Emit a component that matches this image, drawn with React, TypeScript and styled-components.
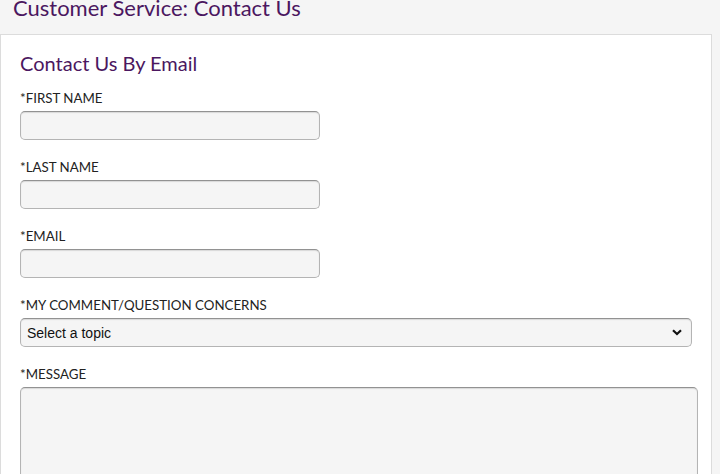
import React from "react";
import styled, { createGlobalStyle } from "styled-components";

const Global = createGlobalStyle`
  html, body { margin: 0; padding: 0; }
  body {
    background: #f5f5f5;
    font-family: "Lato", "Open Sans", sans-serif;
    color: #222;
    overflow: hidden;
  }
`;

const Page = styled.div`
  display: flex;
  flex-direction: column;
  padding-right: 8px;
`;

const Header = styled.header`
  height: 34px;
  padding-left: 13px;
  box-sizing: border-box;
`;

const Title = styled.h1`
  margin: -4px 0 0;
  font-size: 22px;
  line-height: 24px;
  font-weight: 400;
  color: #4b1760;
  white-space: nowrap;
`;

const Panel = styled.section`
  background: #fff;
  border: 1px solid #dcdcdc;
  border-bottom: none;
  padding: 14px 19px 0;
  min-height: 460px;
`;

const Heading = styled.h2`
  margin: 0 0 13px;
  font-size: 20px;
  line-height: 28px;
  font-weight: 400;
  color: #4b1760;
`;

const Group = styled.div`
  display: flex;
  flex-direction: column;
  margin-bottom: 19px;
`;

const Label = styled.label`
  font-size: 13.3px;
  line-height: 16px;
  color: #222;
  margin-bottom: 5px;
  text-transform: uppercase;
`;

const fieldStyle = `
  box-sizing: border-box;
  background: #f5f5f5;
  border: 1px solid #b4b4b4;
  border-top-color: #929292;
  border-radius: 5px;
  box-shadow: inset 0 1px 1px rgba(0, 0, 0, 0.12);
  outline: none;
`;

const TextInput = styled.input`
  ${fieldStyle}
  width: 300px;
  height: 29px;
  padding: 4px 8px;
  font-size: 13px;
`;

const SelectWrap = styled.div`
  position: relative;
  width: 672px;
`;

const Select = styled.select`
  ${fieldStyle}
  appearance: none;
  -webkit-appearance: none;
  width: 100%;
  height: 29px;
  padding: 0 24px 0 6px;
  font-family: "Liberation Sans", Arial, sans-serif;
  font-size: 14px;
  color: #111;
`;

const Chevron = styled.svg`
  position: absolute;
  right: 10px;
  top: 11px;
  pointer-events: none;
`;

const TextArea = styled.textarea`
  ${fieldStyle}
  width: 678px;
  height: 130px;
  resize: vertical;
  padding: 6px;
  font-size: 13px;
`;

export default function App() {
  return (
    <>
      <Global />
      <Page>
        <Header>
          <Title>Customer Service: Contact Us</Title>
        </Header>
        <Panel>
          <Heading>Contact Us By Email</Heading>
          <Group>
            <Label htmlFor="fn">*First Name</Label>
            <TextInput id="fn" type="text" />
          </Group>
          <Group>
            <Label htmlFor="ln">*Last Name</Label>
            <TextInput id="ln" type="text" />
          </Group>
          <Group>
            <Label htmlFor="em">*Email</Label>
            <TextInput id="em" type="email" />
          </Group>
          <Group>
            <Label htmlFor="topic">*My Comment/Question Concerns</Label>
            <SelectWrap>
              <Select id="topic" defaultValue="">
                <option value="">Select a topic</option>
              </Select>
              <Chevron width="10" height="7" viewBox="0 0 10 7">
                <path d="M1 1.2 L5 5 L9 1.2" fill="none" stroke="#111" strokeWidth="2.2" />
              </Chevron>
            </SelectWrap>
          </Group>
          <Group>
            <Label htmlFor="msg">*Message</Label>
            <TextArea id="msg" />
          </Group>
        </Panel>
      </Page>
    </>
  );
}
